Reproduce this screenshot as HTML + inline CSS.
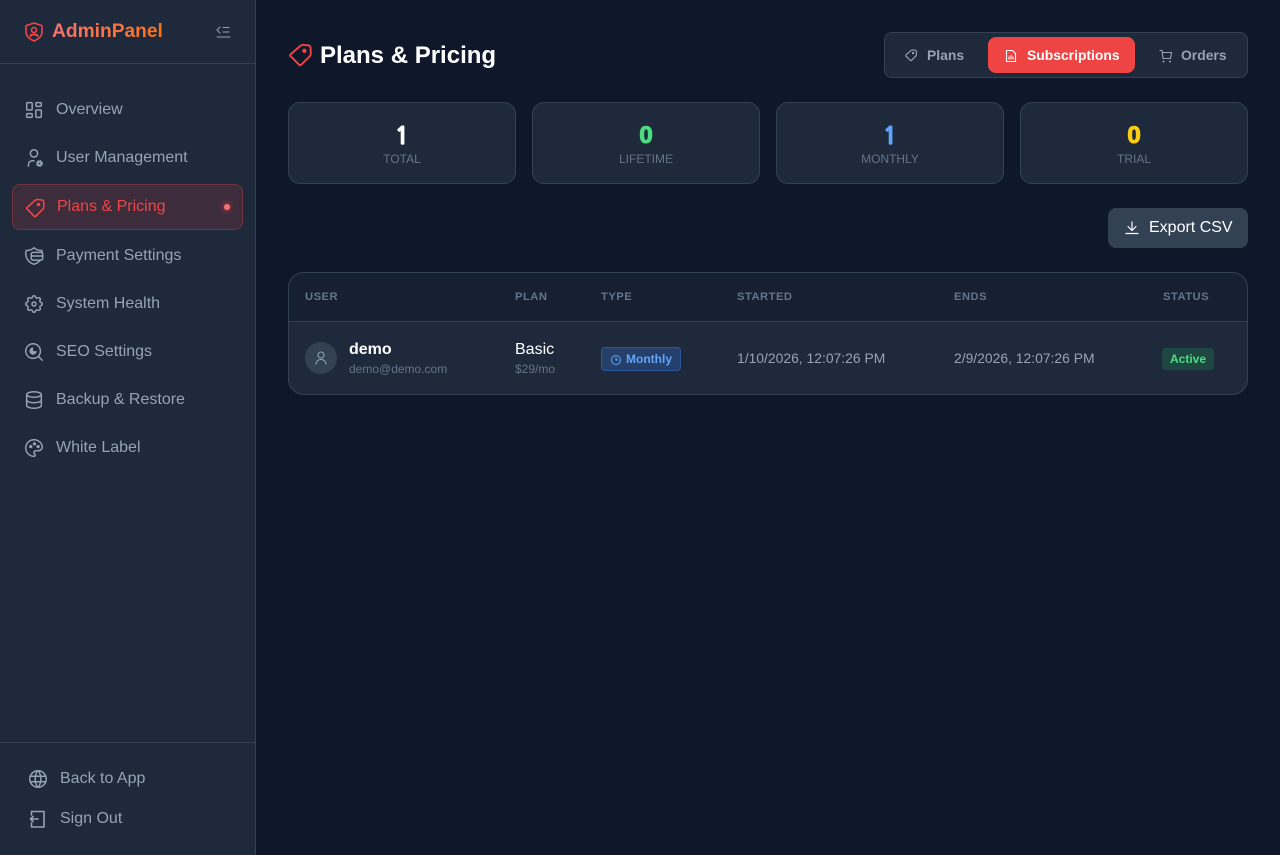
<!DOCTYPE html>
<html><head><meta charset="utf-8"><title>Plans &amp; Pricing</title>
<style>
*{box-sizing:border-box;margin:0;padding:0}
html,body{width:1280px;height:855px;overflow:hidden;background:#0f172a;font-family:"Liberation Sans",Arial,sans-serif;color:#fff}
.a{position:absolute;white-space:nowrap}
svg{position:absolute;fill:none;stroke-linecap:round;stroke-linejoin:round}
#side{position:absolute;left:0;top:0;width:256px;height:855px;background:#1e293b;border-right:1px solid #334155}
.n{position:absolute;left:56px;font-size:16px;line-height:20px;color:#94a3b8;white-space:nowrap}
.ic{stroke:#94a3b8;stroke-width:1.6}
.card{position:absolute;top:102px;width:228px;height:82px;background:#1e293b;border:1px solid #334155;border-radius:12px}
.num{position:absolute;left:0;right:0;top:19px;text-align:center;font-size:24px;line-height:28px;font-weight:bold;-webkit-text-stroke:1.1px currentColor}
.one{font-family:"NanumGothic","Liberation Sans",sans-serif}
.lab{position:absolute;left:0;right:0;top:48px;text-align:center;font-size:12px;line-height:16px;color:#64748b}
.th{position:absolute;top:291px;font-size:11.2px;line-height:13px;font-weight:bold;letter-spacing:.5px;color:#64748b;white-space:nowrap}
</style></head><body>
<div id="side"></div>
<div class="a" style="left:0;top:63px;width:255px;height:1px;background:#334155"></div>
<svg style="left:22px;top:20px" width="24" height="24" viewBox="0 0 24 24" stroke="#ef4444" stroke-width="1.600"><path d="M12 3l7.500 2.500a1 1 0 0 1 .5 1v5.500c0 4-3.500 7-8 9-4.500-2-8-5-8-9v-5.500a1 1 0 0 1 .5-1z"/><circle cx="12" cy="10" r="2.500"/><path d="M8.500 16c0-2 7-2 7 0" stroke-width="2"/></svg>
<div class="a" style="left:52px;top:19px;font-size:19.200px;line-height:26px;font-weight:bold;background:linear-gradient(90deg,#f87171,#f97316);-webkit-background-clip:text;background-clip:text;color:transparent">AdminPanel</div>
<svg style="left:215px;top:25px" width="16" height="14" viewBox="0 0 16 14" stroke="#94a3b8" stroke-width="1"><path d="M5 2L2 5l3 3"/><path d="M8 2.500h6M8 7h6M2 12h13"/></svg>

<svg class="ic" style="left:23px;top:99px" width="22" height="22" viewBox="0 0 24 24"><path d="M5 4h4a1 1 0 0 1 1 1v6a1 1 0 0 1-1 1H5a1 1 0 0 1-1-1V5a1 1 0 0 1 1-1"/><path d="M5 16h4a1 1 0 0 1 1 1v2a1 1 0 0 1-1 1H5a1 1 0 0 1-1-1v-2a1 1 0 0 1 1-1"/><path d="M15 12h4a1 1 0 0 1 1 1v6a1 1 0 0 1-1 1h-4a1 1 0 0 1-1-1v-6a1 1 0 0 1 1-1"/><path d="M15 4h4a1 1 0 0 1 1 1v2a1 1 0 0 1-1 1h-4a1 1 0 0 1-1-1V5a1 1 0 0 1 1-1"/></svg>
<div class="n" style="top:100px">Overview</div>
<svg class="ic" style="left:23px;top:147px" width="22" height="22" viewBox="0 0 24 24"><path d="M8 7a4 4 0 1 0 8 0a4 4 0 0 0-8 0"/><path d="M6 21v-2a4 4 0 0 1 4-4h2"/><circle cx="18" cy="18" r="3" fill="#94a3b8" stroke-dasharray="1.500 .85" stroke-linecap="butt"/><circle cx="18" cy="18" r="1" fill="#1e293b" stroke="none"/></svg>
<div class="n" style="top:148px">User Management</div>

<div class="a" style="left:12px;top:184px;width:231px;height:46px;background:rgba(239,68,68,.15);border:1px solid rgba(239,68,68,.3);border-radius:8px"></div>
<svg style="left:24px;top:198px" width="22" height="20" viewBox="0 0 22 20" stroke="#ef4444" stroke-width="1.600"><path d="M3 9.500L11 2.500Q12 1.500 13.500 1.500L18 2Q19.500 2.200 19.700 4L19.800 9Q19.800 10 19 11L12 18Q11 19 10 18L3 11Q2.300 10.200 3 9.500Z"/><circle cx="14.500" cy="6.500" r="1" fill="#ef4444"/></svg>
<div class="n" style="left:57px;top:197px;color:#ef4444">Plans &amp; Pricing</div>
<div class="a" style="left:224px;top:204px;width:6px;height:6px;border-radius:50%;background:#f87171;box-shadow:0 0 6px #ef4444"></div>

<svg class="ic" style="left:23px;top:244.500px" width="22" height="22" viewBox="0 0 24 24"><path d="M12 3a12 12 0 0 0 8.500 3a12 12 0 0 1-8.500 15a12 12 0 0 1-8.500-15a12 12 0 0 0 8.500-3"/><rect x="9" y="8" width="12.500" height="8.500" rx="2" fill="#1e293b"/><path d="M9 12h12.500"/></svg>
<div class="n" style="top:246px">Payment Settings</div>
<svg class="ic" style="left:23px;top:292.500px" width="22" height="22" viewBox="0 0 24 24"><path d="M10.325 4.317c.426-1.756 2.924-1.756 3.350 0a1.724 1.724 0 0 0 2.573 1.066c1.543-.94 3.310 .826 2.370 2.370a1.724 1.724 0 0 0 1.065 2.572c1.756 .426 1.756 2.924 0 3.350a1.724 1.724 0 0 0-1.066 2.573c.94 1.543-.826 3.310-2.370 2.370a1.724 1.724 0 0 0-2.572 1.065c-.426 1.756-2.924 1.756-3.350 0a1.724 1.724 0 0 0-2.573-1.066c-1.543 .94-3.310-.826-2.370-2.370a1.724 1.724 0 0 0-1.065-2.572c-1.756-.426-1.756-2.924 0-3.350a1.724 1.724 0 0 0 1.066-2.573c-.94-1.543 .826-3.310 2.370-2.370c1 .608 2.296 .07 2.572-1.065z"/><circle cx="12" cy="12" r="2.200"/></svg>
<div class="n" style="top:294px">System Health</div>
<svg class="ic" style="left:23px;top:340.500px" width="22" height="22" viewBox="0 0 24 24"><circle cx="11" cy="11" r="8"/><path d="M21 21l-4.300-4.300"/><path d="M11 7a4 4 0 1 0 4 4h-4z" fill="#94a3b8" stroke="none"/></svg>
<div class="n" style="top:342px">SEO Settings</div>
<svg class="ic" style="left:23px;top:389px" width="22" height="22" viewBox="0 0 24 24"><ellipse cx="12" cy="6" rx="8" ry="3"/><path d="M4 6v6a8 3 0 0 0 16 0V6"/><path d="M4 12v6a8 3 0 0 0 16 0v-6"/></svg>
<div class="n" style="top:390px">Backup &amp; Restore</div>
<svg class="ic" style="left:23px;top:437px" width="22" height="22" viewBox="0 0 24 24"><path d="M12 21a9 9 0 0 1 0-18c4.970 0 9 3.582 9 8c0 1.060-.474 2.078-1.318 2.828c-.844 .75-1.989 1.172-3.182 1.172H14a2 2 0 0 0-1 3.750a1.300 1.300 0 0 1-1 2.250"/><circle cx="8.500" cy="10.500" r="1"/><circle cx="12.500" cy="7.500" r="1"/><circle cx="16.500" cy="10.500" r="1"/></svg>
<div class="n" style="top:438px">White Label</div>

<div class="a" style="left:0;top:742px;width:255px;height:1px;background:#334155"></div>
<svg class="ic" style="left:27px;top:767.500px" width="22" height="22" viewBox="0 0 24 24"><path d="M3 12a9 9 0 1 0 18 0a9 9 0 0 0-18 0"/><path d="M3.600 9h16.800M3.600 15h16.800M11.500 3a17 17 0 0 0 0 18M12.500 3a17 17 0 0 1 0 18"/></svg>
<div class="n" style="left:60px;top:769px">Back to App</div>
<svg class="ic" style="left:29px;top:810px" width="18" height="18" viewBox="0 0 18 18" stroke-width="1.400"><path d="M2.500 5V1.500H15V17H2.500V13"/><path d="M9 9H1.500M4 6.500L1.500 9 4 11.500"/></svg>
<div class="n" style="left:60px;top:809px">Sign Out</div>

<svg style="left:287px;top:43.200px" width="26.400" height="24" viewBox="0 0 22 20" stroke="#ef4444" stroke-width="1.600"><path d="M3 9.500L11 2.500Q12 1.500 13.500 1.500L18 2Q19.500 2.200 19.700 4L19.800 9Q19.800 10 19 11L12 18Q11 19 10 18L3 11Q2.300 10.200 3 9.500Z"/><circle cx="14.500" cy="6.500" r="1" fill="#ef4444"/></svg>
<div class="a" style="left:320px;top:41px;font-size:24px;line-height:30px;font-weight:bold">Plans &amp; Pricing</div>

<div class="a" style="left:884px;top:32px;width:364px;height:46px;background:#1e293b;border:1px solid #334155;border-radius:8px"></div>
<svg style="left:904.400px;top:49px" width="13.800" height="12.600" viewBox="0 0 22 20" stroke="#94a3b8" stroke-width="1.800"><path d="M3 9.500L11 2.500Q12 1.500 13.500 1.500L18 2Q19.500 2.200 19.700 4L19.800 9Q19.800 10 19 11L12 18Q11 19 10 18L3 11Q2.300 10.200 3 9.500Z"/><circle cx="14.500" cy="6.500" r="1" fill="#94a3b8"/></svg>
<div class="a" style="left:927px;top:47px;font-size:13.900px;line-height:16px;font-weight:bold;color:#94a3b8">Plans</div>
<div class="a" style="left:988px;top:37px;width:147px;height:36px;background:#ef4444;border-radius:8px"></div>
<svg style="left:1004px;top:49px" width="14" height="14" viewBox="0 0 14 14" stroke="#fff" stroke-width="1.100"><path d="M2.500 1.500h6l3 3v8h-9z"/><path d="M5 10V8M7 10V6.500M9 10V8"/></svg>
<div class="a" style="left:1027px;top:47px;font-size:13.900px;line-height:16px;font-weight:bold;color:#fff">Subscriptions</div>
<svg style="left:1159px;top:49px" width="14" height="14" viewBox="0 0 14 14" stroke="#94a3b8" stroke-width="1.100"><path d="M1 1.500h2l1 8h7.500l1-6H3.300"/><circle cx="4.500" cy="12.500" r=".5"/><circle cx="11" cy="12.500" r=".5"/></svg>
<div class="a" style="left:1181px;top:47px;font-size:13.900px;line-height:16px;font-weight:bold;color:#94a3b8">Orders</div>

<div class="card" style="left:288px"><div class="num one" style="color:#fff">1</div><div class="lab">TOTAL</div></div>
<div class="card" style="left:532px"><div class="num" style="color:#4ade80">0</div><div class="lab">LIFETIME</div></div>
<div class="card" style="left:776px"><div class="num one" style="color:#60a5fa">1</div><div class="lab">MONTHLY</div></div>
<div class="card" style="left:1020px"><div class="num" style="color:#facc15">0</div><div class="lab">TRIAL</div></div>

<div class="a" style="left:1108px;top:208px;width:140px;height:40px;background:#334155;border-radius:8px"></div>
<svg style="left:1124px;top:220px" width="16" height="16" viewBox="0 0 16 16" stroke="#fff" stroke-width="1.200"><path d="M8 2v8M4 6.500L8 10.500l4-4M2 13.500h12"/></svg>
<div class="a" style="left:1149px;top:218px;font-size:16px;line-height:20px;color:#fff">Export CSV</div>

<div class="a" style="left:288px;top:272px;width:960px;height:123px;background:#1e293b;border:1px solid #334155;border-radius:16px;overflow:hidden"><div style="height:49px;background:#172033;border-bottom:1px solid #334155"></div></div>
<div class="th" style="left:305px">USER</div>
<div class="th" style="left:515px">PLAN</div>
<div class="th" style="left:601px">TYPE</div>
<div class="th" style="left:737px">STARTED</div>
<div class="th" style="left:954px">ENDS</div>
<div class="th" style="left:1163px">STATUS</div>

<div class="a" style="left:305px;top:342px;width:32px;height:32px;border-radius:50%;background:#334155"></div>
<svg style="left:313px;top:350px" width="16" height="16" viewBox="0 0 16 16" stroke="#94a3b8" stroke-width="1.100"><circle cx="8" cy="5" r="3"/><path d="M3 14c.5-3 2.500-4.500 5-4.500s4.500 1.500 5 4.500"/></svg>
<div class="a" style="left:349px;top:340px;font-size:16px;line-height:19px;font-weight:bold">demo</div>
<div class="a" style="left:349px;top:362px;font-size:12px;line-height:15px;color:#64748b">demo@demo.com</div>
<div class="a" style="left:515px;top:340px;font-size:16px;line-height:19px">Basic</div>
<div class="a" style="left:515px;top:362px;font-size:12px;line-height:15px;color:#64748b">$29/mo</div>
<div class="a" style="left:601px;top:347px;width:80px;height:24px;background:rgba(59,130,246,.25);border:1px solid rgba(59,130,246,.35);border-radius:4px"></div>
<svg style="left:610px;top:354px" width="12" height="12" viewBox="0 0 12 12" stroke="#60a5fa" stroke-width="1"><circle cx="6" cy="6" r="4.500"/><path d="M6 3.500V6h2"/></svg>
<div class="a" style="left:626px;top:352px;font-size:12px;line-height:14px;font-weight:bold;color:#60a5fa">Monthly</div>
<div class="a" style="left:737px;top:350px;font-size:13.900px;line-height:16px;color:#94a3b8">1/10/2026, 12:07:26 PM</div>
<div class="a" style="left:954px;top:350px;font-size:13.900px;line-height:16px;color:#94a3b8">2/9/2026, 12:07:26 PM</div>
<div class="a" style="left:1162px;top:348px;width:52px;height:22px;background:rgba(34,197,94,.2);border-radius:4px"></div>
<div class="a" style="left:1170px;top:352px;font-size:12px;line-height:14px;font-weight:bold;color:#4ade80">Active</div>
</body></html>
